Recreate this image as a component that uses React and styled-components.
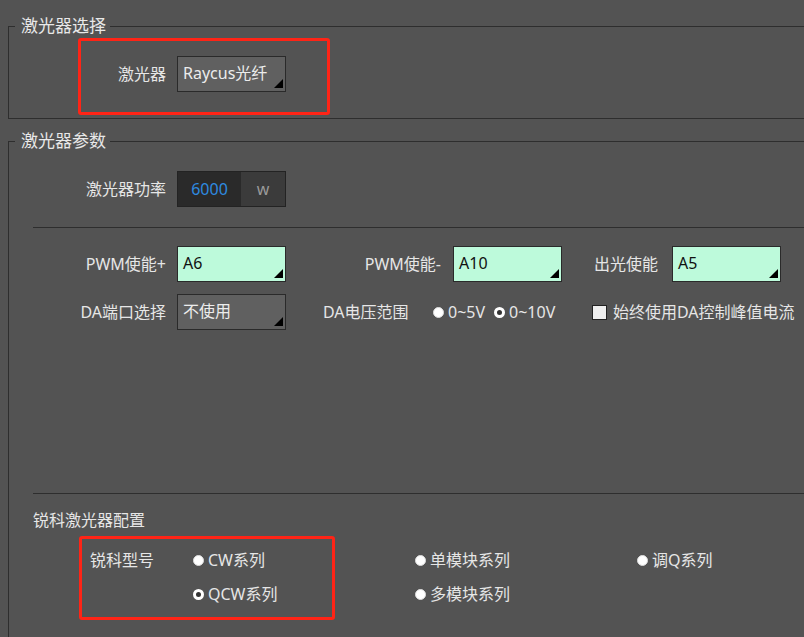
import React from 'react';
import styled, { createGlobalStyle } from 'styled-components';

const GlobalStyle = createGlobalStyle`
  html, body { margin: 0; padding: 0; background: #535353; overflow: hidden; }
  body { font-family: "Noto Sans", "Noto Sans CJK SC", sans-serif; color: #e6e6e6; }
`;

const Page = styled.div`
  width: 804px;
  height: 637px;
  overflow: hidden;
  box-sizing: border-box;
  padding: 15px 0 0 8px;
  font-size: 16px;
  line-height: 22px;
`;

const Group = styled.fieldset`
  margin: ${p => p.$mt || 0}px 0 0 0;
  padding: 0 0 ${p => p.$pb || 0}px 0;
  border: 1px solid #2e2e2e;
  width: 840px;
  box-sizing: border-box;
  min-inline-size: 0;
  min-height: ${p => (p.$minH ? `${p.$minH}px` : 'auto')};
`;

const Legend = styled.legend`
  margin-left: 6px;
  padding: 0 4px 0 6px;
  font-size: 17px;
  line-height: 22px;
  color: #e8e8e8;
`;

const Highlight = styled.div`
  box-sizing: border-box;
  border: 3px solid #ff2416;
  border-radius: 3px;
  width: ${p => p.$w}px;
  height: ${p => p.$h}px;
  margin-left: ${p => p.$ml}px;
  margin-top: ${p => p.$mt || 0}px;
  padding: ${p => p.$pad};
  display: flex;
  align-items: ${p => p.$align || 'center'};
  flex-shrink: 0;
`;

const Label = styled.div`
  width: ${p => (p.$w ? `${p.$w}px` : 'auto')};
  text-align: ${p => p.$align || 'right'};
  margin-right: ${p => p.$mr ?? 11}px;
  margin-left: ${p => p.$ml || 0}px;
  white-space: nowrap;
  flex-shrink: 0;
  color: #e6e6e6;
`;

const Combo = styled.div`
  position: relative;
  box-sizing: border-box;
  width: 109px;
  height: 36px;
  border: 1px solid #2a2a2a;
  background: ${p => (p.$mint ? '#bdfadb' : '#606060')};
  color: ${p => (p.$mint ? '#111' : '#ececec')};
  padding: 0 0 2px 5px;
  display: flex;
  align-items: center;
  flex-shrink: 0;
  white-space: nowrap;
  &::after {
    content: '';
    position: absolute;
    right: 2px;
    bottom: 3px;
    width: 0;
    height: 0;
    border-left: 9px solid transparent;
    border-bottom: 9px solid #000;
  }
`;

const PowerBox = styled.div`
  display: flex;
  box-sizing: border-box;
  width: 109px;
  height: 36px;
  border: 1px solid #232323;
`;

const PowerValue = styled.div`
  width: 63px;
  background: #2a2a2a;
  color: #2e8be0;
  display: flex;
  align-items: center;
  justify-content: center;
`;

const PowerUnit = styled.div`
  flex: 1;
  background: #3b3b3b;
  color: #9a9a9a;
  display: flex;
  align-items: center;
  justify-content: center;
`;

const Row = styled.div`
  display: flex;
  align-items: center;
  padding-left: ${p => p.$pl ?? 24}px;
  margin-top: ${p => p.$mt || 0}px;
`;

const Divider = styled.div`
  height: 1px;
  background: #2e2e2e;
  margin-left: 24px;
  margin-top: ${p => p.$mt}px;
`;

const SubTitle = styled.div`
  margin: ${p => p.$mt}px 0 0 24px;
  color: #e6e6e6;
`;

const RadioGroup = styled.div`
  display: flex;
  align-items: center;
  gap: 9px;
  width: ${p => p.$w}px;
  flex-shrink: 0;
`;

const RadioOption = styled.div`
  display: flex;
  align-items: center;
  gap: 4px;
  white-space: nowrap;
  height: 22px;
`;

const RadioDot = styled.span`
  box-sizing: border-box;
  width: 11px;
  height: 11px;
  border-radius: 50%;
  background: ${p => (p.$checked ? '#333' : '#fff')};
  border: ${p => (p.$checked ? '3px solid #fff' : '1px solid #ddd')};
  flex-shrink: 0;
`;

const CheckOption = styled.div`
  display: flex;
  align-items: center;
  gap: 6px;
  white-space: nowrap;
`;

const CheckBox = styled.span`
  box-sizing: border-box;
  width: 15px;
  height: 15px;
  background: #efefef;
  border: 1px solid #222;
  flex-shrink: 0;
`;

const OptionColumn = styled.div`
  display: flex;
  flex-direction: column;
  gap: 12px;
  width: ${p => (p.$w ? `${p.$w}px` : 'auto')};
  margin-left: ${p => p.$ml || 0}px;
  padding-top: ${p => p.$pt || 0}px;
  flex-shrink: 0;
`;

const ModelRow = styled.div`
  display: flex;
  align-items: flex-start;
  margin-top: ${p => p.$mt}px;
`;

function Radio({ checked, children }) {
  return (
    <RadioOption>
      <RadioDot $checked={checked} />
      <span>{children}</span>
    </RadioOption>
  );
}

export default function App() {
  return (
    <>
      <GlobalStyle />
      <Page>
        <Group $pb={3}>
          <Legend>激光器选择</Legend>
          <Highlight $w={252} $h={77} $ml={69} $mt={1} $pad="0 0 5px 37px">
            <Label>激光器</Label>
            <Combo>Raycus光纤</Combo>
          </Highlight>
        </Group>

        <Group $mt={11} $minH={560}>
          <Legend>激光器参数</Legend>
          <Row $mt={19}>
            <Label $w={133}>激光器功率</Label>
            <PowerBox>
              <PowerValue>6000</PowerValue>
              <PowerUnit>w</PowerUnit>
            </PowerBox>
          </Row>
          <Divider $mt={20} />
          <Row $mt={18}>
            <Label $w={133}>PWM使能+</Label>
            <Combo $mint>A6</Combo>
            <Label $w={155} $mr={12}>PWM使能-</Label>
            <Combo $mint>A10</Combo>
            <Label $w={96} $mr={14}>出光使能</Label>
            <Combo $mint>A5</Combo>
          </Row>
          <Row $mt={12}>
            <Label $w={133}>DA端口选择</Label>
            <Combo>不使用</Combo>
            <Label $w={110} $ml={37} $mr={0} $align="left">DA电压范围</Label>
            <RadioGroup $w={159}>
              <Radio>0~5V</Radio>
              <Radio checked>0~10V</Radio>
            </RadioGroup>
            <CheckOption>
              <CheckBox />
              <span>始终使用DA控制峰值电流</span>
            </CheckOption>
          </Row>
          <Divider $mt={163} />
          <SubTitle $mt={15}>锐科激光器配置</SubTitle>
          <ModelRow $mt={5}>
            <Highlight $w={256} $h={84} $ml={70} $pad="10px 0 0 8px" $align="flex-start">
              <Label $w={103} $align="left" $mr={0}>锐科型号</Label>
              <OptionColumn>
                <Radio>CW系列</Radio>
                <Radio checked>QCW系列</Radio>
              </OptionColumn>
            </Highlight>
            <OptionColumn $w={222} $ml={80} $pt={13}>
              <Radio>单模块系列</Radio>
              <Radio>多模块系列</Radio>
            </OptionColumn>
            <OptionColumn $pt={13}>
              <Radio>调Q系列</Radio>
            </OptionColumn>
          </ModelRow>
        </Group>
      </Page>
    </>
  );
}
